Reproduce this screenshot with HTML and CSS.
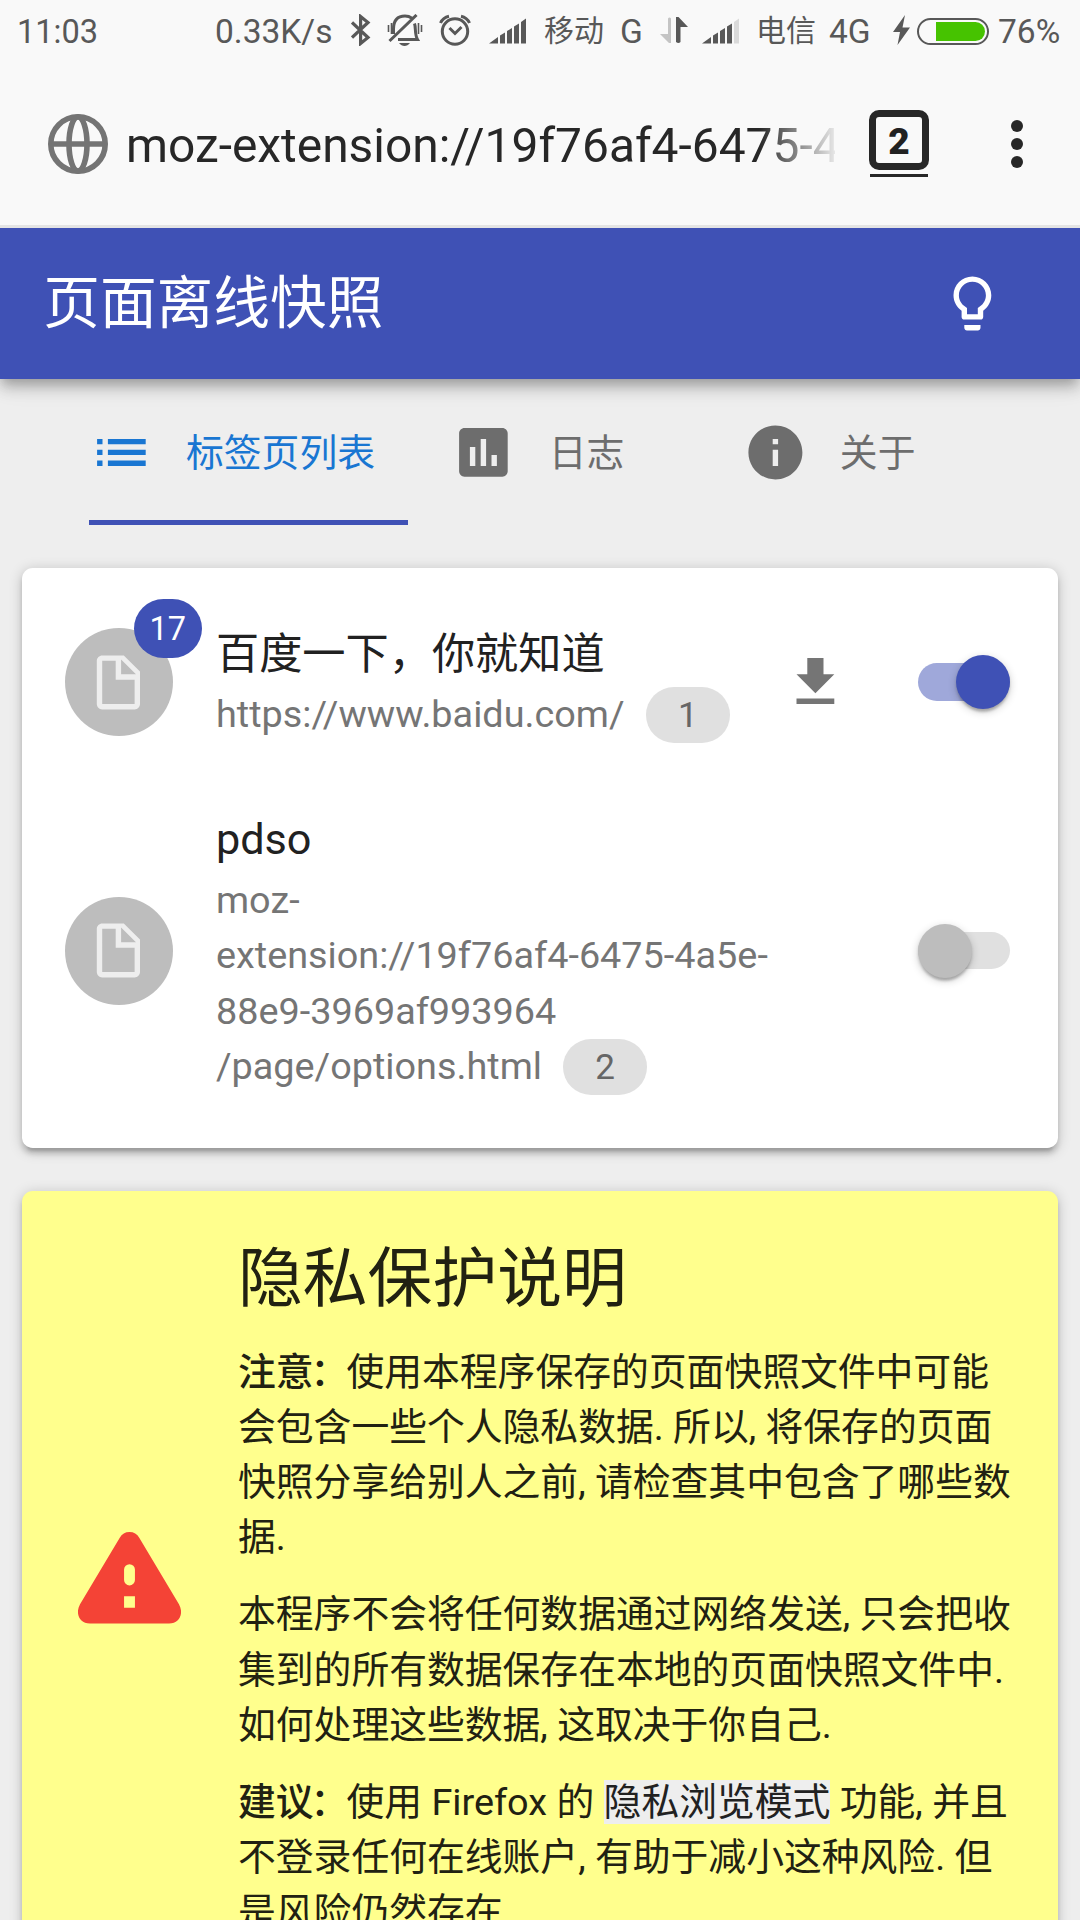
FILE: index.html
```html
<!DOCTYPE html>
<html lang="zh-CN">
<head>
<meta charset="utf-8">
<title>页面离线快照</title>
<link rel="stylesheet" href="styles.css">
</head>
<body>
<div class="status-bar">
  <span class="status-text clock">11:03</span>
  <span class="status-text speed">0.33K/s</span>
  <svg class="st-bluetooth" width="20" height="32" viewBox="0 0 20 32" fill="none" stroke="#585858" stroke-width="3.2"><path d="M1 8.500 17 23.500 9.600 29.500V2.500L17 8.500 1 23.500"/></svg>
  <svg class="st-bell" width="36" height="32" viewBox="0 0 36 32" fill="none" stroke="#585858" stroke-width="3"><path d="M6.500 20V15C6.500 6 11 2 18 2c3 0 5 .8 7 2.200M2.500 27 29.500 1M27.500 9.500c1.500 4 0 11 3 16H11"/><path d="M1.500 11v7M4.500 9v11M31.500 9v11M34.500 11v7" stroke-width="1.600"/><path d="M12 29h11c-3 4-8 4-11 0z" fill="#585858" stroke="none"/></svg>
  <svg class="st-alarm" width="32" height="32" viewBox="0 0 32 32" fill="none" stroke="#585858" stroke-width="3"><circle cx="16" cy="17.500" r="12.700"/><path d="M10.500 14l5.500 5.500L22.500 13M1.500 9Q4 3.500 10 2.200M30.500 9Q28 3.500 22 2.200"/></svg>
  <svg class="st-signal" width="38" height="26" viewBox="0 0 38 26" fill="#585858"><path d="M0 25.500 9 19v6.500zM11 17.500l5-3v11h-5zM18 13l5-3v15.500h-5zM25 8.500l5-3v20h-5zM32 4l5-3.500v25h-5z"/></svg>
  <span class="status-cjk carrier-a">移动</span>
  <span class="status-text net-a">G</span>
  <svg class="st-arrows" width="28" height="27" viewBox="0 0 28 27"><path fill="#c4c4c4" d="M8 1.500Q9.500-.5 11 1.500V26H9L0 17h8z"/><path fill="#585858" d="M16 0h2.500L28 10h-7.500v15q-2 2-4.500 0z"/></svg>
  <svg class="st-signal st-signal-b" width="38" height="26" viewBox="0 0 38 26" fill="#585858"><path d="M0 25.500 9 19v6.500zM11 17.500l5-3v11h-5zM18 13l5-3v15.500h-5zM25 8.500l5-3v20h-5z"/><path fill="#dadada" d="M32 4l5-3.500v25h-5z"/></svg>
  <span class="status-cjk carrier-b">电信</span>
  <span class="status-text net-b">4G</span>
  <svg class="st-bolt" width="17" height="30" viewBox="0 0 17 30" fill="#585858"><path d="M12 0 0 17h7L4.500 30 17 12.500H9.500z"/></svg>
  <span class="battery"><span class="battery-level"></span></span>
  <span class="status-text percent">76%</span>
</div>

<div class="url-bar">
  <svg class="globe" width="60" height="60" viewBox="0 0 60 60" fill="none" stroke="#747474" stroke-width="5.600"><circle cx="30" cy="30" r="27.200"/><ellipse cx="30" cy="30" rx="9" ry="27"/><path d="M3 30h54"/></svg>
  <div class="url">moz-extension://19f76af4-6475-4</div>
  <div class="tab-counter"><div class="tab-count">2</div><div class="tab-stack"></div></div>
  <div class="menu"><i></i><i></i><i></i></div>
</div>

<header class="app-bar">
  <h1 class="app-title">页面离线快照</h1>
  <svg class="icon" viewBox="0 0 24 24"><path d="M9 21c0 .55.45 1 1 1h4c.55 0 1-.45 1-1v-1H9v1zm3-19C8.140 2 5 5.140 5 9c0 2.380 1.190 4.470 3 5.740V17c0 .55.45 1 1 1h6c.55 0 1-.45 1-1v-2.260c1.810-1.270 3-3.360 3-5.740 0-3.860-3.140-7-7-7zm2.850 11.100l-.85.6V16h-4v-2.300l-.85-.6C7.800 12.160 7 10.630 7 9c0-2.760 2.240-5 5-5s5 2.240 5 5c0 1.630-.8 3.160-2.150 4.100z"/></svg>
</header>

<nav class="tabs">
  <a class="tab tab-active"><svg class="icon" viewBox="0 0 24 24"><path d="M3 13h2v-2H3v2zm0 4h2v-2H3v2zm0-8h2V7H3v2zm4 4h14v-2H7v2zm0 4h14v-2H7v2zM7 7v2h14V7H7z"/></svg><span>标签页列表</span></a>
  <a class="tab tab-log"><svg class="icon" viewBox="0 0 24 24"><path d="M19 3H5c-1.100 0-2 .9-2 2v14c0 1.100.9 2 2 2h14c1.100 0 2-.9 2-2V5c0-1.100-.9-2-2-2zM9 17H7v-7h2v7zm4 0h-2V7h2v10zm4 0h-2v-4h2v4z"/></svg><span>日志</span></a>
  <a class="tab"><svg class="icon" viewBox="0 0 24 24"><path d="M12 2C6.480 2 2 6.480 2 12s4.480 10 10 10 10-4.480 10-10S17.520 2 12 2zm1 15h-2v-6h2v6zm0-8h-2V7h2v2z"/></svg><span>关于</span></a>
</nav>

<main class="content">
  <section class="card list">
    <div class="row row-short">
      <div class="avatar"><svg class="icon" viewBox="0 0 24 24"><path fill-rule="evenodd" d="M6 2h8l6 6v12c0 1.100-.9 2-2 2H6c-1.100 0-2-.9-2-2V4c0-1.100.9-2 2-2zM6 4v16h12v-9h-7V4zM13 3.500V9h5.500z"/></svg><span class="badge">17</span></div>
      <div class="row-text">
        <div class="row-title">百度一下，你就知道</div>
        <div class="row-url"><div>https://www.baidu.com/<span class="chip">1</span></div></div>
      </div>
      <svg class="icon download" viewBox="0 0 24 24"><path d="M19 9h-4V3H9v6H5l7 7 7-7zM5 18v2h14v-2H5z"/></svg>
      <div class="switch switch-on"><span class="knob"></span></div>
    </div>
    <div class="row row-tall">
      <div class="avatar"><svg class="icon" viewBox="0 0 24 24"><path fill-rule="evenodd" d="M6 2h8l6 6v12c0 1.100-.9 2-2 2H6c-1.100 0-2-.9-2-2V4c0-1.100.9-2 2-2zM6 4v16h12v-9h-7V4zM13 3.500V9h5.500z"/></svg></div>
      <div class="row-text">
        <div class="row-title">pdso</div>
        <div class="row-url"><div>moz-</div><div>extension://19f76af4-6475-4a5e-</div><div>88e9-3969af993964</div><div>/page/options.html<span class="chip">2</span></div></div>
      </div>
      <div class="switch"><span class="knob"></span></div>
    </div>
  </section>

  <section class="card notice">
    <svg class="warning" width="103" height="92" viewBox="0 0 104 93"><path fill="#f44336" fill-rule="evenodd" d="M42 6Q45.500 0 52 0t10 6l40 67c5 9 1 19.500-10 19.500H12C1 92.500-3 82 2 73zM46.500 38v10.500a5.500 5.500 0 0 0 11 0V38a5.500 5.500 0 0 0-11 0zM46.500 65v11.500h11V65z"/></svg>
    <div class="notice-text">
      <h2>隐私保护说明</h2>
      <p><b>注意<span class="colon">：</span></b>使用本程序保存的页面快照文件中可能<br>会包含一些个人隐私数据. 所以, 将保存的页面<br>快照分享给别人之前, 请检查其中包含了哪些数<br>据.</p>
      <p>本程序不会将任何数据通过网络发送, 只会把收<br>集到的所有数据保存在本地的页面快照文件中.<br>如何处理这些数据, 这取决于你自己.</p>
      <p><b>建议<span class="colon">：</span></b>使用 Firefox 的 <code>隐私浏览模式</code> 功能, 并且<br>不登录任何在线账户, 有助于减小这种风险. 但<br>是风险仍然存在.</p>
    </div>
  </section>
</main>
</body>
</html>
```
FILE: styles.css
```css
* { box-sizing: border-box; }

body {
  margin: 0;
  width: 1080px;
  height: 1920px;
  overflow: hidden;
  background: #eee;
  font-family: Roboto, "Noto Sans CJK SC", sans-serif;
  font-size: 37.8px;
  color: #212121;
  white-space: nowrap;
}

svg { display: block; flex: none; }
.icon { width: 64.8px; height: 64.8px; fill: currentColor; flex: none; }

/* Phone status bar */
.status-bar {
  display: flex;
  align-items: center;
  height: 60px;
  padding-left: 17px;
  background: #f9f9f9;
  color: #585858;
}
.status-text { font-size: 33.5px; line-height: 40px; margin-top: 3px; flex: none; }
.status-cjk { font-size: 30px; line-height: 40px; margin-top: 2px; flex: none; width: 60px; }
.clock { width: 198px; font-size: 32.6px; }
.speed { width: 136px; }
.st-bell { margin-left: 16px; }
.st-alarm { margin-left: 16px; }
.st-signal { margin: 2px 0 0 18px; }
.carrier-a { margin-left: 17px; }
.net-a { width: 40px; margin-left: 16px; }
.st-signal-b { margin-left: 14px; }
.carrier-b { margin-left: 16px; }
.net-b { width: 64px; margin-left: 13px; }
.battery {
  display: flex;
  justify-content: flex-end;
  width: 72px;
  height: 27px;
  margin: 2px 0 0 7px;
  padding: 2px;
  border: 2px solid #585858;
  border-radius: 14px;
  flex: none;
}
.battery-level { width: 49px; background: #46c300; border-radius: 0 10px 10px 0; }
.percent { margin-left: 9px; }

/* Browser toolbar */
.url-bar {
  display: flex;
  align-items: flex-start;
  height: 168px;
  padding-left: 48px;
  background: #f9f9f9;
  border-bottom: 3px solid #e4e4e4;
}
.globe { margin-top: 54px; }
.url {
  width: 709px;
  margin: 55px 0 0 18px;
  overflow: hidden;
  font-size: 47.9px;
  line-height: 62px;
  color: #272727;
  -webkit-mask-image: linear-gradient(to right, #000 633px, transparent 716px);
  mask-image: linear-gradient(to right, #000 633px, transparent 716px);
}
.tab-counter { width: 60px; margin: 50px 0 0 34px; }
.tab-count {
  height: 60px;
  border: 7px solid #272727;
  border-radius: 10px;
  font-size: 37px;
  font-weight: 900;
  line-height: 49px;
  text-align: center;
}
.tab-stack { height: 3px; margin: 4px 1px 0; background: #272727; }
.menu { display: flex; flex-direction: column; gap: 6px; margin: 60px 0 0 82px; }
.menu i { width: 12px; height: 12px; border-radius: 50%; background: #272727; }

/* App bar */
.app-bar {
  display: flex;
  align-items: center;
  justify-content: space-between;
  height: 151px;
  padding: 0 75.6px 0 43.2px;
  background: #3f51b5;
  color: #fff;
  box-shadow: 0 5.4px 10.8px -2.7px rgba(0,0,0,.2), 0 10.8px 13.5px rgba(0,0,0,.14), 0 2.7px 27px rgba(0,0,0,.12);
  clip-path: inset(0 0 -60px 0);
}
.app-title { margin: 0; font-size: 56.7px; font-weight: 400; line-height: 66px; }

.tabs {
  display: flex;
  height: 146px;
  padding-left: 88.8px;
  color: #6d6d6d;
}
.tab {
  display: flex;
  align-items: center;
  gap: 32.4px;
  height: 146px;
  border-bottom: 5.4px solid transparent;
  padding-right: 32.4px;
  margin-right: 43.2px;
}
.tab .icon { margin-top: 5px; }
.tab-active { width: 319.5px; color: #1976d2; border-bottom-color: #3f51b5; }
.tab-log { width: 248px; }

/* Cards */
.content { padding: 43px 21.6px 0; }
.card {
  border-radius: 10.8px;
  box-shadow: 0 2.7px 13.5px rgba(0,0,0,.2), 0 5.4px 5.4px rgba(0,0,0,.14), 0 8.1px 2.7px -5.4px rgba(0,0,0,.12);
}
.list { height: 580px; padding: 21.6px 0; background: #fff; }
.row { display: flex; align-items: center; padding: 0 48.6px 0 43.2px; }
.row-short { height: 185px; }
.row-tall { height: 352px; }
.avatar {
  position: relative;
  display: flex;
  align-items: center;
  justify-content: center;
  width: 108px;
  height: 108px;
  border-radius: 50%;
  background: #bdbdbd;
  color: #eee;
  flex: none;
}
.badge {
  position: absolute;
  left: 69px;
  top: -29px;
  width: 68px;
  height: 59px;
  border-radius: 29.5px;
  background: #3f51b5;
  color: #fff;
  font-size: 32.4px;
  line-height: 60px;
  text-align: center;
}
.row-text { flex: 1; padding: 2px 0 0 43.2px; }
.row-title { font-size: 43.2px; line-height: 64.8px; }
.row-url { color: #757575; line-height: 55.2px; }
.chip {
  display: inline-block;
  height: 56px;
  margin-left: 21.2px;
  padding: 0 32.2px;
  border-radius: 28px;
  background: #e0e0e0;
  color: #666;
  font-size: 35.1px;
  line-height: 56px;
}
.download { margin-right: 70.6px; color: #757575; }
.switch {
  display: flex;
  align-items: center;
  width: 91.8px;
  height: 37.8px;
  border-radius: 18.9px;
  background: #e0e0e0;
  flex: none;
}
.knob {
  width: 54px;
  height: 54px;
  border-radius: 50%;
  background: #bdbdbd;
  flex: none;
  box-shadow: 0 2.7px 8.1px rgba(0,0,0,.2), 0 2.7px 2.7px rgba(0,0,0,.14), 0 5.4px 2.7px -2.7px rgba(0,0,0,.12);
}
.switch-on { justify-content: flex-end; background: #9fa8da; }
.switch-on .knob { background: #3f51b5; }

/* Privacy notice */
.notice {
  display: flex;
  align-items: center;
  height: 774px;
  margin-top: 43px;
  padding-left: 56px;
  background: #ffff8d;
  color: #212112;
}
.notice-text { align-self: flex-start; padding: 44px 0 0 57.4px; }
.notice h2 { margin: 0; font-size: 64.8px; font-weight: 400; line-height: 88px; }
.notice p { margin: 21.6px 0 0; line-height: 55.3px; }
.notice b { font-weight: 500; }
.notice .colon { margin: 0 -2px 0 -3px; }
.notice code { font-family: inherit; background: #eee; color: #212121; }
```
